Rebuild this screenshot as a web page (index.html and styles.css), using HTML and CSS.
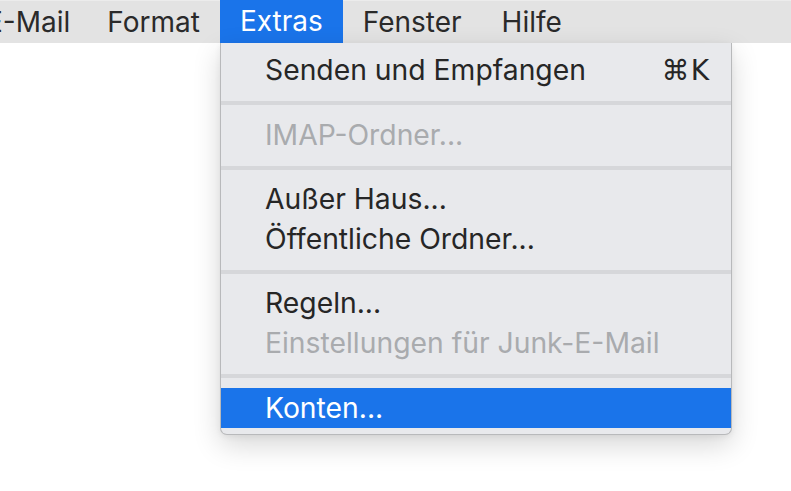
FILE: index.html
```html
<!DOCTYPE html>
<html lang="de">
<head>
<meta charset="utf-8">
<link rel="stylesheet" href="styles.css">
</head>
<body>
<div class="menubar">
  <span class="mb-item first">E-Mail</span>
  <span class="mb-item">Format</span>
  <span class="mb-item active">Extras</span>
  <span class="mb-item">Fenster</span>
  <span class="mb-item">Hilfe</span>
</div>
<div class="menu">
  <div class="row"><span>Senden und Empfangen</span><span class="kbd">⌘K</span></div>
  <div class="sep"></div>
  <div class="row disabled"><span>IMAP-Ordner...</span></div>
  <div class="sep"></div>
  <div class="row"><span>Außer Haus...</span></div>
  <div class="row"><span>Öffentliche Ordner...</span></div>
  <div class="sep"></div>
  <div class="row"><span>Regeln...</span></div>
  <div class="row disabled"><span>Einstellungen für Junk-E-Mail</span></div>
  <div class="sep"></div>
  <div class="row selected"><span>Konten...</span></div>
</div>
</body>
</html>
```

FILE: styles.css
```css
* { box-sizing: border-box; }
html, body {
  margin: 0;
  padding: 0;
  background: #ffffff;
  overflow: hidden;
  width: 791px;
  height: 491px;
}
body {
  font-family: Inter, "Noto Sans", "DejaVu Sans", sans-serif;
  font-size: 28px;
  color: #262626;
  position: relative;
}
.menubar {
  height: 43px;
  background: #e3e3e3;
  border-top: 1px solid #ececec;
  display: flex;
  margin-left: -34px;
  white-space: nowrap;
}
.mb-item {
  padding: 0 20px 0 20px;
  line-height: 42px;
  color: #2a2a2a;
}
.mb-item.first {
  padding-right: 17px;
}
.mb-item.active {
  background: #1a74ea;
  color: #ffffff;
  margin-top: -1px;
  line-height: 43px;
  height: 43px;
}
.menu {
  position: absolute;
  left: 220px;
  top: 43px;
  width: 512px;
  background: #e8e9ec;
  border: 1px solid #b8b9bb;
  border-top: none;
  border-radius: 0 0 7px 7px;
  padding: 8px 0 6.5px 0;
  box-shadow: 0 10px 28px rgba(0, 0, 0, 0.16), 0 2px 6px rgba(0, 0, 0, 0.06);
}
.row {
  height: 39.5px;
  line-height: 39.5px;
  padding: 0 21px 0 44px;
  display: flex;
  justify-content: space-between;
  white-space: nowrap;
  color: #262626;
  font-size: 28.3px;
}
.row.disabled { color: #a9abae; }
.row.selected {
  background: #1a74ea;
  color: #ffffff;
  height: 40.5px;
  line-height: 40.5px;
  margin-top: -0.5px;
  margin-bottom: -0.5px;
}
.kbd {
  font-family: "DejaVu Sans", Inter, sans-serif;
  font-size: 28px;
  letter-spacing: 1px;
}
.sep {
  height: 25px;
  padding: 10.5px 0;
}
.sep::before {
  content: "";
  display: block;
  height: 4px;
  background: #d6d7da;
}
```
